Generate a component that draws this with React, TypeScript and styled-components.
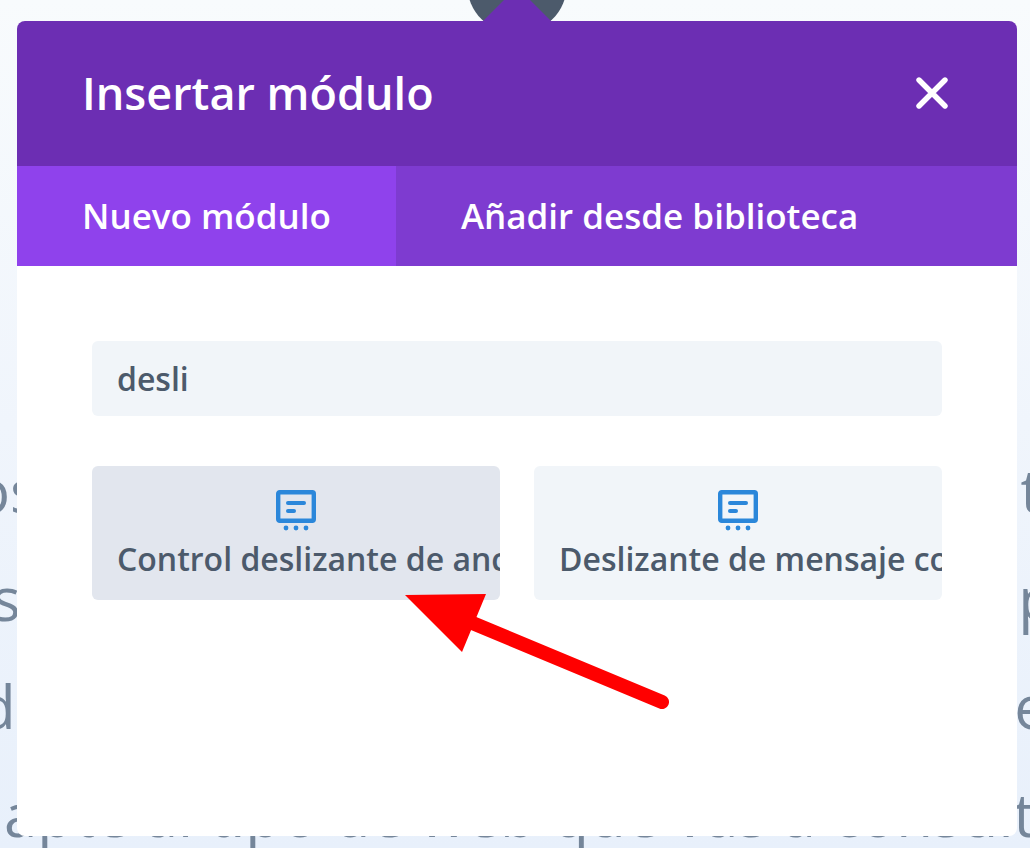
import {FC} from "react";
import styled, {createGlobalStyle} from "styled-components";

const GlobalStyle = createGlobalStyle`
  html, body {
    margin: 0;
    padding: 0;
    height: 848px;
    overflow: hidden;
    background: #fff;
    font-family: "Open Sans", "Liberation Sans", sans-serif;
  }
`
const StyledPage = styled.div`
  position: relative;
  width: 1030px;
  height: 848px;
  overflow: hidden;
  background: linear-gradient(180deg, #f8fbfd 0%, #f0f5fc 50%, #e8f0fb 100%);
`
const StyledArticle = styled.div`
  display: flex;
  flex-direction: column;
  padding-top: 436px;
  color: #75869a;
  font-size: 60px;
  line-height: 108px;
  font-weight: 400;
`
const StyledArticleLine = styled.div<{ $left: number, $right?: number }>`
  display: flex;
  justify-content: space-between;
  white-space: nowrap;
  margin-left: ${p => p.$left}px;
  margin-right: ${p => p.$right ?? 0}px;
`
const StyledAddButton = styled.div`
  position: absolute;
  left: 467px;
  top: -66px;
  width: 100px;
  height: 100px;
  border-radius: 50%;
  background: #4c5a6b;
`
const StyledModal = styled.div`
  position: absolute;
  left: 17px;
  top: 21px;
  width: 1000px;
  height: 815px;
  display: flex;
  flex-direction: column;
  background: #fff;
  border-radius: 8px;

  &::before {
    content: "";
    position: absolute;
    left: 466px;
    top: -34px;
    border-left: 34px solid transparent;
    border-right: 34px solid transparent;
    border-bottom: 34px solid #6c2eb3;
  }
`
const StyledHeader = styled.div`
  height: 145px;
  padding: 0 69px 2px 65px;
  box-sizing: border-box;
  display: flex;
  align-items: center;
  justify-content: space-between;
  background: #6c2eb3;
  border-radius: 8px 8px 0 0;
`
const StyledTitle = styled.h1`
  margin: 0;
  font-size: 45px;
  font-weight: 600;
  color: #fff;
`
const StyledClose = styled.button`
  display: flex;
  padding: 0;
  border: none;
  background: none;
  cursor: pointer;
`
const StyledTabs = styled.div`
  display: flex;
  height: 100px;
  background: #7e3bd0;
`
const StyledTab = styled.div<{ $active?: boolean }>`
  display: flex;
  align-items: center;
  padding: 0 65px 2px;
  font-size: 35px;
  font-weight: 600;
  color: #fff;
  background: ${p => p.$active ? "#8f42ec" : "transparent"};
`
const StyledBody = styled.div`
  display: flex;
  flex-direction: column;
  gap: 50px;
  padding: 75px 75px 0;
`
const StyledSearch = styled.input`
  box-sizing: border-box;
  width: 850px;
  height: 75px;
  padding: 0 25px;
  border: none;
  border-radius: 6px;
  outline: none;
  background: #f1f5f9;
  font-family: inherit;
  font-size: 32px;
  font-weight: 600;
  color: #4c5a6b;
`
const StyledGrid = styled.div`
  display: grid;
  grid-template-columns: 408px 408px;
  gap: 34px;
`
const StyledCard = styled.div<{ $hover?: boolean }>`
  box-sizing: border-box;
  height: 134px;
  padding: 24px 2px 0 25px;
  display: flex;
  flex-direction: column;
  align-items: center;
  overflow: hidden;
  border-radius: 6px;
  background: ${p => p.$hover ? "#e2e6ee" : "#f1f5f9"};
`
const StyledCardIcon = styled.svg`
  flex: none;
  margin-left: -23px;
`
const StyledCardLabel = styled.div`
  align-self: flex-start;
  margin-top: 5px;
  white-space: nowrap;
  font-size: 32px;
  line-height: 44px;
  font-weight: 600;
  color: #4c5a6b;
`
const StyledArrow = styled.svg`
  position: absolute;
  left: 0;
  top: 0;
  pointer-events: none;
`

const ModuleIcon: FC = () => (
    <StyledCardIcon width="40" height="42" viewBox="0 0 40 42" fill="#2b87da">
        <rect x="2.2" y="2.2" width="35.6" height="28.6" rx="1.5" fill="none" stroke="#2b87da" strokeWidth="4.4"/>
        <rect x="10" y="11" width="20" height="4" rx="2"/>
        <rect x="10" y="19" width="10" height="4" rx="2"/>
        <circle cx="10" cy="38" r="2.4"/>
        <circle cx="20" cy="38" r="2.4"/>
        <circle cx="30" cy="38" r="2.4"/>
    </StyledCardIcon>
)

const App: FC = () => {
    return (
        <StyledPage>
            <GlobalStyle/>
            <StyledArticle>
                <StyledArticleLine $left={-26} $right={-12}><span>os</span><span>t</span></StyledArticleLine>
                <StyledArticleLine $left={-8} $right={-25}><span>s</span><span>p</span></StyledArticleLine>
                <StyledArticleLine $left={-21} $right={-18}><span>d</span><span>e</span></StyledArticleLine>
                <StyledArticleLine $left={4}><span>apte al tipo de web que vas a consult</span></StyledArticleLine>
            </StyledArticle>
            <StyledAddButton/>
            <StyledModal>
                <StyledHeader>
                    <StyledTitle>Insertar módulo</StyledTitle>
                    <StyledClose aria-label="Cerrar">
                        <svg width="32" height="32" viewBox="0 0 32 32" fill="none" stroke="#fff" strokeWidth="5.4" strokeLinecap="round">
                            <path d="M3 3 L29 29 M29 3 L3 29"/>
                        </svg>
                    </StyledClose>
                </StyledHeader>
                <StyledTabs>
                    <StyledTab $active>Nuevo módulo</StyledTab>
                    <StyledTab>Añadir desde biblioteca</StyledTab>
                </StyledTabs>
                <StyledBody>
                    <StyledSearch defaultValue="desli"/>
                    <StyledGrid>
                        <StyledCard $hover>
                            <ModuleIcon/>
                            <StyledCardLabel>Control deslizante de anchura completa</StyledCardLabel>
                        </StyledCard>
                        <StyledCard>
                            <ModuleIcon/>
                            <StyledCardLabel>Deslizante de mensaje completo</StyledCardLabel>
                        </StyledCard>
                    </StyledGrid>
                </StyledBody>
            </StyledModal>
            <StyledArrow width="1030" height="848" viewBox="0 0 1030 848">
                <path d="M470 622 L662 702" stroke="#ff0000" strokeWidth="14" strokeLinecap="round" fill="none"/>
                <polygon points="405,595 486,594 462,652" fill="#ff0000"/>
            </StyledArrow>
        </StyledPage>
    )
}

export default App
